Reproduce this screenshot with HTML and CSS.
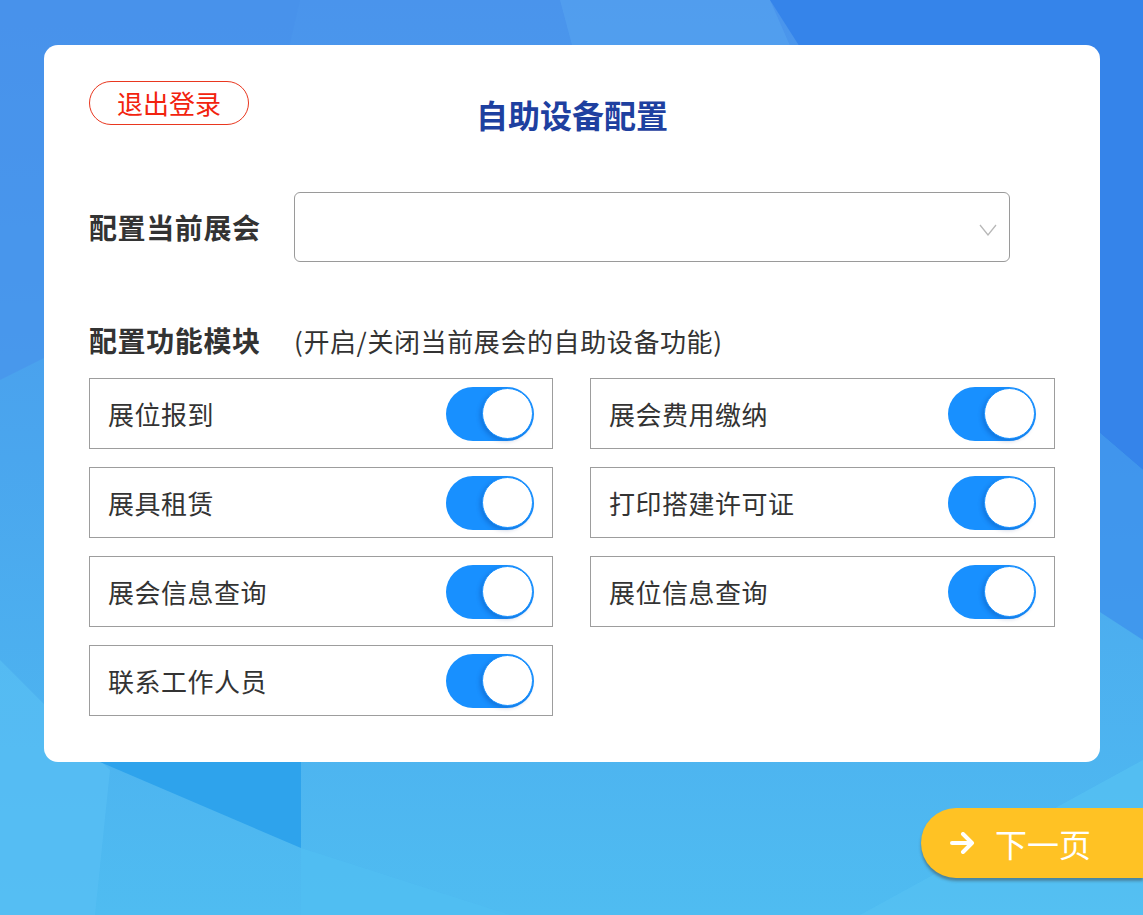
FILE: index.html
```html
<!DOCTYPE html>
<html lang="zh-CN">
<head>
<meta charset="utf-8">
<title>自助设备配置</title>
<link rel="stylesheet" href="styles.css">
</head>
<body>
<div class="page">
  <svg class="bg" width="1143" height="915" viewBox="0 0 1143 915" preserveAspectRatio="none" aria-hidden="true">
    <defs>
      <linearGradient id="g" x1="0" y1="0" x2="0" y2="1">
        <stop offset="0" stop-color="#4a94ec"/>
        <stop offset="0.5" stop-color="#4aa6ee"/>
        <stop offset="1" stop-color="#4fbcf1"/>
      </linearGradient>
    </defs>
    <rect width="1143" height="915" fill="url(#g)"/>
    <polygon points="560,0 770,0 840,160 640,300" fill="#5aa8f2" opacity="0.45"/>
    <polygon points="770,0 1143,0 1143,470 980,330" fill="#3584ea"/>
    <polygon points="980,330 1143,470 1143,640 1020,560" fill="#3c8fec" opacity="0.7"/>
    <polygon points="0,0 300,0 240,260 0,380" fill="#4891eb" opacity="0.6"/>
    <polygon points="0,660 110,770 95,915 0,915" fill="#58bff3" opacity="0.7"/>
    <polygon points="100,762 301,762 301,848" fill="#2ea3ec"/>
    <polygon points="301,848 510,915 301,915" fill="#52bff3" opacity="0.6"/>
    <polygon points="860,915 1143,760 1143,915" fill="#55c0f3" opacity="0.8"/>
  </svg>

  <main class="card">
    <header class="card-head">
      <button class="logout">退出登录</button>
      <h1 class="title">自助设备配置</h1>
      <span></span>
    </header>

    <div class="field-row">
      <label class="label">配置当前展会</label>
      <div class="select">
        <svg class="chev" width="18" height="12" viewBox="0 0 18 12"><polyline points="1,1 9,11 17,1" fill="none" stroke="#b8b8b8" stroke-width="1.3"/></svg>
      </div>
    </div>

    <div class="section-head">
      <span class="label">配置功能模块</span>
      <span class="hint">(开启/关闭当前展会的自助设备功能)</span>
    </div>

    <div class="grid">
      <div class="item"><span>展位报到</span><span class="toggle"><span class="knob"></span></span></div>
      <div class="item"><span>展会费用缴纳</span><span class="toggle"><span class="knob"></span></span></div>
      <div class="item"><span>展具租赁</span><span class="toggle"><span class="knob"></span></span></div>
      <div class="item"><span>打印搭建许可证</span><span class="toggle"><span class="knob"></span></span></div>
      <div class="item"><span>展会信息查询</span><span class="toggle"><span class="knob"></span></span></div>
      <div class="item"><span>展位信息查询</span><span class="toggle"><span class="knob"></span></span></div>
      <div class="item"><span>联系工作人员</span><span class="toggle"><span class="knob"></span></span></div>
    </div>
  </main>

  <div class="footer">
    <button class="next">
      <svg width="26" height="22" viewBox="0 0 26 22"><path d="M2 11 H22 M13 2 L22 11 L13 20" fill="none" stroke="#fff" stroke-width="4" stroke-linecap="round" stroke-linejoin="round"/></svg>
      <span>下一页</span>
    </button>
  </div>
</div>
</body>
</html>
```

FILE: styles.css
```css
* { box-sizing: border-box; }
html, body { margin: 0; padding: 0; }
body {
  font-family: "Noto Sans CJK SC", "Noto Sans", sans-serif;
  width: 1143px;
  height: 915px;
  overflow: hidden;
}
.page {
  position: relative;
  width: 1143px;
  height: 915px;
  padding: 45px 43px 0 44px;
}
.bg {
  position: absolute;
  left: 0;
  top: 0;
  z-index: 0;
}
.card {
  position: relative;
  z-index: 1;
  background: #fff;
  border-radius: 14px;
  width: 1056px;
  height: 717px;
  padding: 36px 45px 0 45px;
}
.card-head {
  display: grid;
  grid-template-columns: 1fr auto 1fr;
  align-items: start;
  height: 111px;
}
.logout {
  justify-self: start;
  width: 160px;
  height: 44px;
  border: 1px solid #e9371f;
  border-radius: 22px;
  background: #fff;
  color: #f2230e;
  font-family: inherit;
  font-size: 26px;
  line-height: 40px;
  padding: 0;
}
.title {
  margin: 11px 0 0 0;
  font-size: 32px;
  line-height: 44px;
  font-weight: 700;
  color: #1e40a0;
}
.field-row {
  display: flex;
  align-items: center;
  height: 70px;
}
.label {
  font-size: 28px;
  font-weight: 700;
  color: #333;
  width: 205px;
  flex: none;
  letter-spacing: 0.6px;
}
.select {
  width: 716px;
  height: 70px;
  border: 1px solid #9a9a9a;
  border-radius: 6px;
  display: flex;
  align-items: center;
  justify-content: flex-end;
  padding: 6px 12px 0 0;
}
.section-head {
  display: flex;
  align-items: center;
  margin-top: 60px;
  height: 36px;
}
.hint {
  font-size: 26px;
  color: #333;
  letter-spacing: 0.6px;
}
.grid {
  margin-top: 20px;
  display: grid;
  grid-template-columns: 464px 465px;
  column-gap: 37px;
  row-gap: 18px;
}
.item {
  height: 71px;
  border: 1px solid #9d9d9d;
  display: flex;
  align-items: center;
  justify-content: space-between;
  padding: 0 18px 0 18px;
  font-size: 26px;
  letter-spacing: 0.5px;
  color: #333;
}
.toggle {
  width: 88px;
  height: 54px;
  border-radius: 27px;
  background: #1890ff;
  display: flex;
  align-items: center;
  justify-content: flex-end;
  padding-right: 1px;
}
.knob {
  width: 51px;
  height: 51px;
  border-radius: 50%;
  background: #fff;
  border: 1px solid #1890ff;
  box-shadow: -2px 2px 4px rgba(0, 40, 120, 0.25);
}
.footer {
  position: relative;
  z-index: 1;
  display: flex;
  justify-content: flex-end;
  margin: 46px -43px 0 0;
}
.next {
  width: 222px;
  height: 70px;
  border: none;
  border-radius: 35px 0 0 35px;
  background: #ffc224;
  box-shadow: 0 3px 3px rgba(60, 60, 60, 0.45);
  color: #fff;
  font-family: inherit;
  font-size: 32px;
  display: flex;
  align-items: center;
  padding: 0 0 0 29px;
  gap: 19px;
}
.next span { line-height: 1; }
```
